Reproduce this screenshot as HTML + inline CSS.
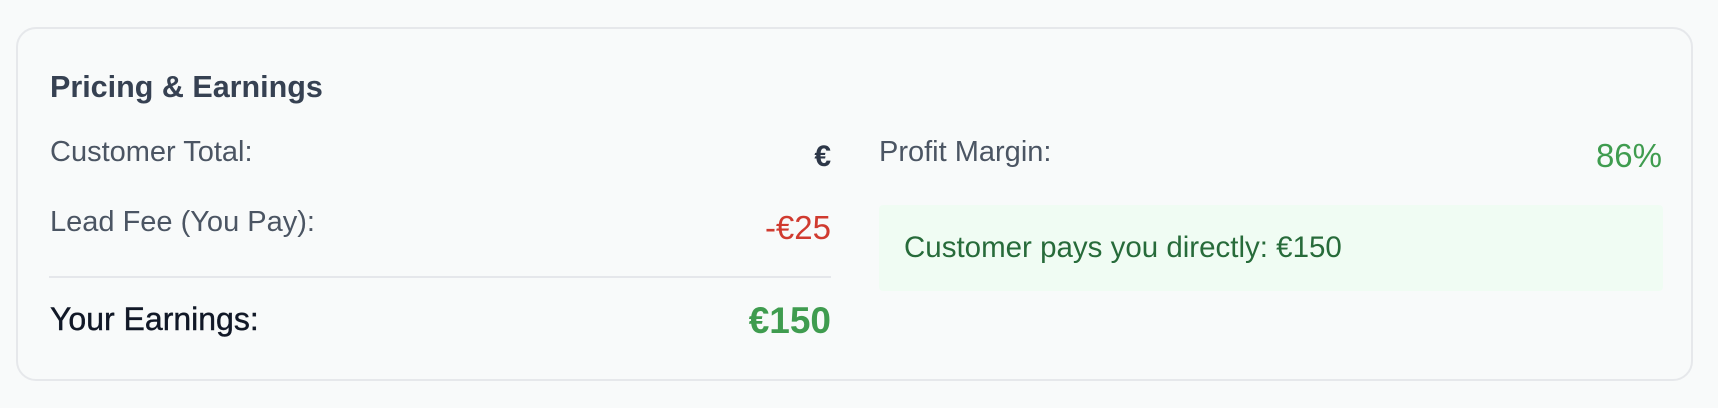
<!DOCTYPE html>
<html><head><meta charset="utf-8"><style>
html,body{margin:0;padding:0;width:1718px;height:408px;background:#f8fafa;overflow:hidden;font-family:"Liberation Sans",sans-serif;}
.card{position:absolute;left:16px;top:27px;width:1677px;height:354px;border:2px solid #e6e8eb;border-radius:20px;background:#f8fafa;box-sizing:border-box;}
.t{position:absolute;white-space:nowrap;}
.r{text-align:right;}
</style></head><body>
<div class="card"></div>
<div class="t" style="left:50px;top:72px;font-size:30.5px;line-height:30px;font-weight:bold;color:#364152;">Pricing &amp; Earnings</div>
<div class="t" style="left:50px;top:138px;font-size:29px;line-height:29px;color:#4b5563;">Customer Total:</div>
<div class="t r" style="right:887px;top:142px;font-size:30px;line-height:30px;font-weight:bold;color:#2d3748;">€</div>
<div class="t" style="left:50px;top:208px;font-size:29px;line-height:29px;color:#4b5563;">Lead Fee (You Pay):</div>
<div class="t r" style="right:887px;top:211px;font-size:33px;line-height:33px;color:#d03a2f;">-€25</div>
<div style="position:absolute;left:49px;top:276px;width:782px;height:2px;background:#e5e7eb;"></div>
<div class="t" style="left:50px;top:303px;font-size:32px;line-height:32px;color:#111827;-webkit-text-stroke:0.4px #111827;">Your Earnings:</div>
<div class="t r" style="right:887px;top:302px;font-size:37px;line-height:37px;font-weight:bold;color:#3f9c4f;">€150</div>
<div class="t" style="left:879px;top:138px;font-size:29px;line-height:29px;color:#4b5563;">Profit Margin:</div>
<div class="t r" style="right:56px;top:139px;font-size:33px;line-height:33px;color:#3f9c4f;">86%</div>
<div style="position:absolute;left:879px;top:205px;width:784px;height:86px;background:#f0fcf3;border-radius:4px;"></div>
<div class="t" style="left:904px;top:233px;font-size:29.5px;line-height:29px;color:#276b3a;">Customer pays you directly: €150</div>
</body></html>
